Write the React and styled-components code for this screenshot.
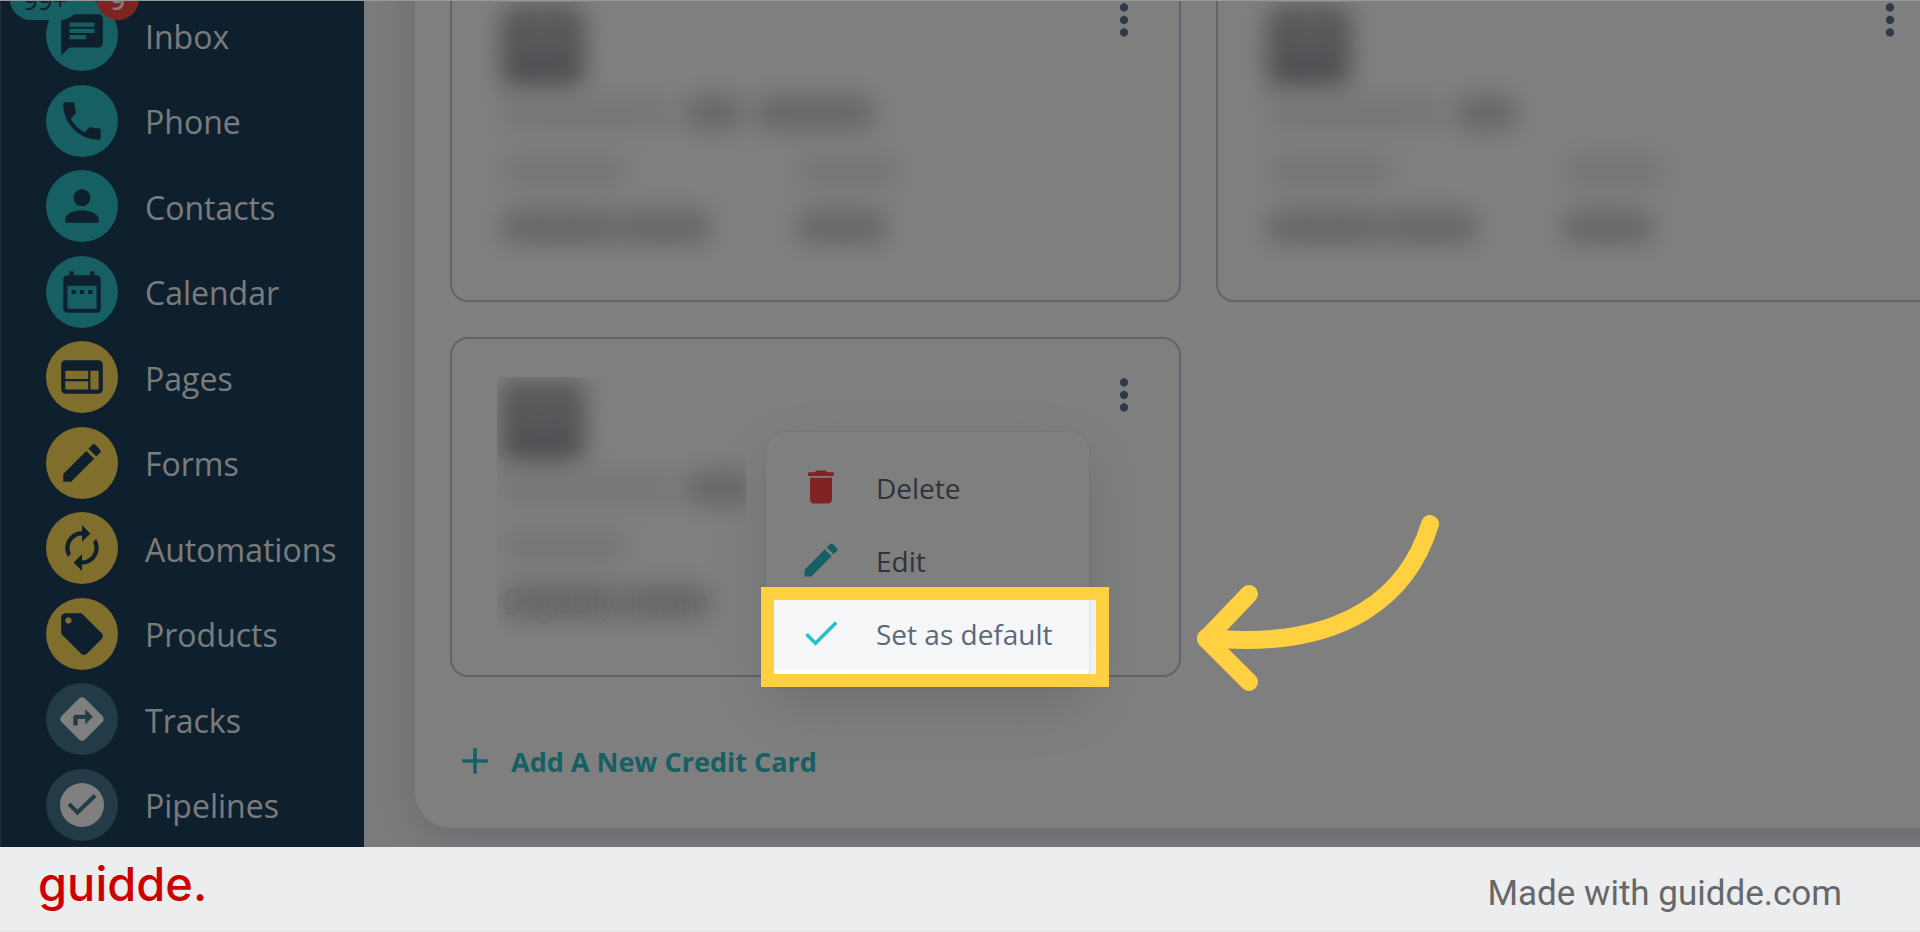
import React from "react";
import styled, { createGlobalStyle } from "styled-components";
import {
  MdAdd,
  MdAutorenew,
  MdCheck,
  MdChat,
  MdDateRange,
  MdDelete,
  MdDirections,
  MdEdit,
  MdLocalOffer,
  MdMoreVert,
  MdPerson,
  MdPhone,
  MdWeb,
} from "react-icons/md";

const color = {
  navy: "#1c3e5a",
  teal: "#2cc0c8",
  yellow: "#ffdc58",
  steel: "#46748e",
  red: "#ff4844",
  ink: "#5a6878",
  line: "#becbd6",
  marker: "#ffd141",
};

const GlobalStyle = createGlobalStyle`
  *, *::before, *::after { box-sizing: border-box; }
  body {
    margin: 0;
    font-family: "Open Sans", "Noto Sans", sans-serif;
    color: ${color.ink};
  }
  button { font: inherit; color: inherit; border: 0; background: none; padding: 0; cursor: pointer; }
`;

const Page = styled.div`
  display: flex;
  flex-direction: column;
  height: 100vh;
`;

const Stage = styled.div`
  flex: 1;
  min-height: 0;
  display: flex;
  position: relative;
  overflow: hidden;
  border-top: 1px solid #989a9a;
`;

const Sidebar = styled.nav`
  flex: none;
  width: 364px;
  background: ${color.navy};
  border-left: 1px solid #445e74;
  display: flex;
`;

const NavList = styled.ul`
  list-style: none;
  flex: 1;
  margin: -2px 0 6px;
  padding: 0 0 0 45px;
  display: flex;
  flex-direction: column;
  justify-content: space-between;
`;

const NavLink = styled.a`
  position: relative;
  display: flex;
  align-items: center;
  gap: 27px;
  height: 72px;
  font-size: 32px;
  color: #f5f7f9;
  text-decoration: none;
`;

const NavLabel = styled.span`
  padding-top: 2px;
`;

const NavIcon = styled.span`
  display: grid;
  place-items: center;
  width: 72px;
  height: 72px;
  border-radius: 50%;
  background: ${(p) => color[p.$tone]};
  color: ${(p) => (p.$tone === "steel" ? "#fff" : color.navy)};
  svg { display: block; }
`;

const Badge = styled.span`
  position: absolute;
  top: -21px;
  left: ${(p) => (p.$alert ? 51 : -36)}px;
  min-width: 42px;
  height: 42px;
  padding: 0 ${(p) => (p.$alert ? 0 : 13)}px;
  border-radius: 21px;
  text-align: center;
  font-size: 26px;
  line-height: 44px;
  font-weight: ${(p) => (p.$alert ? 600 : 400)};
  background: ${(p) => (p.$alert ? color.red : color.teal)};
  color: ${(p) => (p.$alert ? "#fff" : color.navy)};
`;

const Main = styled.main`
  flex: 1;
  min-width: 0;
  display: flex;
  flex-direction: column;
  justify-content: flex-end;
  background: #f5f6f9;
`;

const Panel = styled.section`
  flex: none;
  margin: 0 -62px 19px 51px;
  padding: 35px 35px 45px;
  border-radius: 36px;
  background: #fff;
  box-shadow: 0 8px 40px rgba(40, 50, 80, 0.16);
`;

const CardGrid = styled.div`
  display: grid;
  grid-template-columns: 1fr 1fr;
  gap: 35px;
`;

const Card = styled.article`
  position: relative;
  display: flex;
  justify-content: space-between;
  align-items: flex-start;
  padding: 38px 30px 38px 25px;
  border: 2px solid ${color.line};
  border-radius: 18px;
`;

const MoreButton = styled.button`
  margin-top: -7px;
  color: #5c768e;
  svg { display: block; }
`;

const Details = styled.div`
  width: 580px;
  padding: 4px 0 11px 25px;
  overflow: hidden;
  clip-path: ${(p) => (p.$cut ? "inset(0 calc(100% - 269px) 0 20px)" : "none")};
`;

const Brand = styled.div`
  width: 82px;
  height: 82px;
  border-radius: 14px;
  background: radial-gradient(circle at 50% 35%, #bcbec2 0, #94969c 50px);
  filter: blur(13px);
`;

const Line = styled.div`
  display: flex;
  align-items: center;
  gap: 14px;
  height: 32px;
  margin-top: ${(p) => p.$top}px;
`;

const Columns = styled.div`
  display: grid;
  grid-template-columns: 296px 1fr;
  align-items: center;
  height: ${(p) => p.$height}px;
  margin-top: ${(p) => p.$top}px;
`;

const Smudge = styled.span`
  display: block;
  width: ${(p) => p.$width}px;
  height: 32px;
  border-radius: 10px;
  background: ${(p) => (p.$strong ? "#c6c9ce" : "#e8eaea")};
  filter: blur(13px);
`;

const Holder = styled.span`
  position: relative;
  justify-self: start;
  font-size: 33px;
  line-height: 48px;
  color: rgba(90, 104, 120, ${(p) => (p.$clear ? 0.1 : 0.03)});

  &::before {
    content: "";
    position: absolute;
    inset: 8px 0;
    border-radius: 10px;
    background: linear-gradient(90deg, #c6c9ce 50%, #dfe1e4 56%, #c6c9ce 62%);
    filter: blur(13px);
  }
`;

const Menu = styled.div`
  position: absolute;
  z-index: 2;
  top: 93px;
  right: 90px;
  width: 323px;
  padding: 18px 0;
  border-radius: 20px;
  background: #fff;
  box-shadow: 0 20px 60px rgba(70, 90, 120, 0.2), 0 0 3px rgba(70, 90, 120, 0.12);
`;

const MenuRow = styled.div`
  position: relative;
`;

const MenuItem = styled.button`
  display: flex;
  align-items: center;
  gap: 33px;
  width: 100%;
  height: 73px;
  padding-left: 33px;
  font-size: 28px;
  background: ${(p) => (p.$active ? "#f5f6f8" : "transparent")};
  svg { flex: none; color: ${(p) => color[p.$tone]}; }
`;

const MenuLabel = styled.span`
  padding-top: 2px;
`;

/* Marks the step's target; its spread shadow dims everything around it. */
const Spotlight = styled.div`
  position: absolute;
  inset: -9px -20px -18px -5px;
  border: 13px solid ${color.marker};
  box-shadow: 0 0 0 9999px rgba(0, 0, 0, 0.5);
  pointer-events: none;
`;

const Arrow = styled.svg`
  position: absolute;
  top: -86px;
  left: 422px;
  width: 244px;
  height: 178px;
  fill: none;
  stroke: ${color.marker};
  stroke-width: 18;
  stroke-linecap: round;
  stroke-linejoin: round;
`;

const AddButton = styled.button`
  display: flex;
  align-items: center;
  gap: 14px;
  height: 44px;
  margin-top: 62px;
  padding-left: 3px;
  font-size: 27px;
  font-weight: 700;
  color: ${color.teal};
`;

const Footer = styled.footer`
  flex: none;
  height: 85px;
  padding: 0 78px 0 38px;
  display: flex;
  align-items: center;
  justify-content: space-between;
  background: #ecedef;
  border-bottom: 1px solid #dfe0e1;
`;

const Logo = styled.a`
  margin-bottom: 10px;
  font: 500 47px/60px Inter, sans-serif;
  color: #cc0000;
  text-decoration: none;
`;

const Credit = styled.span`
  margin-top: 10px;
  font: 400 35px/40px Roboto, sans-serif;
  color: #666769;
`;

function PipelineIcon() {
  return (
    <svg width="46" height="46" viewBox="0 0 46 46" aria-hidden="true">
      <circle cx="23" cy="23" r="22" fill="#fff" />
      <path d="M10 22 L18.5 30.5 L36 13.5" fill="none" stroke={color.steel} strokeWidth="4" />
    </svg>
  );
}

const navItems = [
  { label: "Inbox", icon: <MdChat size={50} />, tone: "teal", count: "99+", alerts: "9" },
  { label: "Phone", icon: <MdPhone size={50} />, tone: "teal" },
  { label: "Contacts", icon: <MdPerson size={50} />, tone: "teal" },
  { label: "Calendar", icon: <MdDateRange size={50} />, tone: "teal" },
  { label: "Pages", icon: <MdWeb size={50} />, tone: "yellow" },
  { label: "Forms", icon: <MdEdit size={50} />, tone: "yellow" },
  { label: "Automations", icon: <MdAutorenew size={50} />, tone: "yellow" },
  { label: "Products", icon: <MdLocalOffer size={50} />, tone: "yellow" },
  { label: "Tracks", icon: <MdDirections size={52} />, tone: "steel" },
  { label: "Pipelines", icon: <PipelineIcon />, tone: "steel" },
];

function CreditCard({ numbers, cut, children }) {
  return (
    <Card>
      <Details $cut={cut}>
        <Brand />
        <Line $top={9}>
          <Smudge $width={numbers[0]} />
          {numbers.slice(1).map((w) => (
            <Smudge key={w} $width={w} $strong />
          ))}
        </Line>
        <Columns $top={26} $height={32}>
          <Smudge $width={124} />
          <Smudge $width={100} />
        </Columns>
        <Columns $top={16} $height={48}>
          <Holder $clear={cut}>Digably Team</Holder>
          <Smudge $width={88} $strong />
        </Columns>
      </Details>
      <MoreButton type="button" aria-label="Card options">
        <MdMoreVert size={50} />
      </MoreButton>
      {children}
    </Card>
  );
}

export default function App() {
  return (
    <Page>
      <GlobalStyle />
      <Stage>
        <Sidebar>
          <NavList>
            {navItems.map((item) => (
              <li key={item.label}>
                <NavLink href="#">
                  <NavIcon $tone={item.tone}>{item.icon}</NavIcon>
                  <NavLabel>{item.label}</NavLabel>
                  {item.count && <Badge>{item.count}</Badge>}
                  {item.alerts && <Badge $alert>{item.alerts}</Badge>}
                </NavLink>
              </li>
            ))}
          </NavList>
        </Sidebar>
        <Main>
          <Panel>
            <CardGrid>
              <CreditCard numbers={[170, 56, 118]} />
              <CreditCard numbers={[174, 60]} />
              <CreditCard numbers={[170, 64]} cut>
                <Menu>
                  <MenuItem type="button" $tone="red">
                    <MdDelete size={44} />
                    <MenuLabel>Delete</MenuLabel>
                  </MenuItem>
                  <MenuItem type="button" $tone="teal">
                    <MdEdit size={44} />
                    <MenuLabel>Edit</MenuLabel>
                  </MenuItem>
                  <MenuRow>
                    <MenuItem type="button" $tone="teal" $active>
                      <MdCheck size={44} />
                      <MenuLabel>Set as default</MenuLabel>
                    </MenuItem>
                    <Spotlight>
                      <Arrow viewBox="0 0 244 178" aria-hidden="true">
                        <path d="M234 10 C214 76 154 138 10 124" />
                        <path d="M53 80 L10 125 L53 168" />
                      </Arrow>
                    </Spotlight>
                  </MenuRow>
                </Menu>
              </CreditCard>
            </CardGrid>
            <AddButton type="button">
              <MdAdd size={44} />
              Add A New Credit Card
            </AddButton>
          </Panel>
        </Main>
      </Stage>
      <Footer>
        <Logo href="#">guidde.</Logo>
        <Credit>Made with guidde.com</Credit>
      </Footer>
    </Page>
  );
}
